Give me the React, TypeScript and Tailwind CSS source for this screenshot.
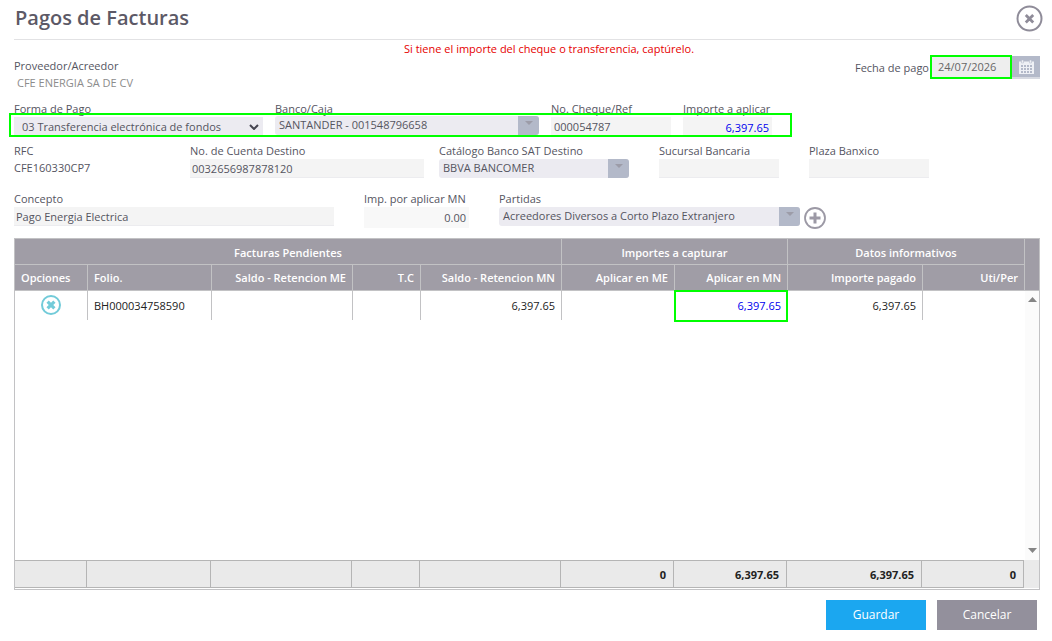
import React from "react";

interface FieldProps {
  label: string;
  className?: string;
  children?: React.ReactNode;
}

const Field = ({ label, className = "", children }: FieldProps) => (
  <div className={`flex shrink-0 flex-col items-start ${className}`}>
    <label className="h-4 whitespace-nowrap leading-4">{label}</label>
    {children}
  </div>
);

interface ComboProps {
  value: string;
  className?: string;
}

const Combo = ({ value, className = "" }: ComboProps) => (
  <div className={`flex h-[19px] overflow-hidden rounded-[3px] bg-[#ecebf1] ${className}`}>
    <span className="flex-1 whitespace-nowrap pl-1 leading-[18px]">{value}</span>
    <span className="flex w-[21px] justify-center bg-[#b3b9c9] pt-[5px]">
      <svg width="8" height="4" viewBox="0 0 8 4">
        <path d="M0 0h8L4 4z" fill="#9c9ca8" />
      </svg>
    </span>
  </div>
);

const columns = [
  { title: "Opciones", width: "w-[73px]", align: "text-left", value: "", total: "" },
  { title: "Folio.", width: "w-[124px]", align: "text-left", value: "BH000034758590", total: "" },
  { title: "Saldo - Retencion ME", width: "w-[141px]", align: "text-right", value: "", total: "" },
  { title: "T.C", width: "w-[68px]", align: "text-right", value: "", total: "" },
  { title: "Saldo - Retencion MN", width: "w-[141px]", align: "text-right", value: "6,397.65", total: "" },
  { title: "Aplicar en ME", width: "w-[113px]", align: "text-right", value: "", total: "0" },
  { title: "Aplicar en MN", width: "w-[113px]", align: "text-right", value: "6,397.65", total: "6,397.65" },
  { title: "Importe pagado", width: "w-[135px]", align: "text-right", value: "6,397.65", total: "6,397.65" },
  { title: "Uti/Per", width: "w-[102px]", align: "text-right", value: "", total: "0" },
];

const groups = [
  { title: "Facturas Pendientes", width: "w-[547px]" },
  { title: "Importes a capturar", width: "w-[226px]" },
  { title: "Datos informativos", width: "w-[237px]" },
];

const Header = () => (
  <header className="flex h-10 items-start justify-between border-b border-[#e2e2e4] pl-px">
    <h1 className="pt-1 text-[20px] font-semibold leading-7 text-[#5c5966]">Pagos de Facturas</h1>
    <button className="-mr-[3px] mt-[5px]">
      <svg width="27" height="27" viewBox="0 0 27 27" fill="none" stroke="#8f8c99">
        <circle cx="13.5" cy="13.5" r="12" strokeWidth="2" />
        <path d="M9.8 10l7.4 7.4M17.2 10l-7.4 7.4" strokeWidth="2.8" />
      </svg>
    </button>
  </header>
);

const DateField = () => (
  <div className="flex items-start">
    <span className="pr-px pt-[5px] leading-4">Fecha de pago</span>
    <div className="flex h-6 w-[82px] items-center border-2 border-[#00ff00] bg-[#eeeeee] pl-1.5 text-[#666]">
      24/07/2026
    </div>
    <div className="mt-px flex h-[23px] w-7 justify-center border-b-2 border-[#d6d9e1] bg-[#b3b9c9] pt-1">
      <svg width="15" height="14" viewBox="0 0 15 14">
        <path d="M0 1.5h15V14H0z" fill="#eef0f5" />
        <path d="M2.5 0h2v3h-2zM10.5 0h2v3h-2z" fill="#eef0f5" stroke="#b3b9c9" strokeWidth=".5" />
        <path
          d="M2 5h2v2H2zM5 5h2v2H5zM8 5h2v2H8zM11 5h2v2h-2zM2 8h2v2H2zM5 8h2v2H5zM8 8h2v2H8zM11 8h2v2h-2zM2 11h2v2H2zM5 11h2v2H5zM8 11h2v2H8zM11 11h2v2h-2z"
          fill="#b3b9c9"
        />
      </svg>
    </div>
  </div>
);

const InvoiceTable = () => (
  <section className="flex h-[352px] border border-[#c2c2c4] text-[#222]">
    <div className="flex w-full flex-col">
      <div className="flex h-[52px] border-b border-[#c2c2c4] bg-[#a09da6] font-semibold text-white">
        <div className="flex w-[1010px] flex-col">
          <div className="flex h-[26px] border-b border-[#c2c2c4]">
            {groups.map((group) => (
              <div key={group.title} className={`border-r border-[#c2c2c4] pt-0.5 text-center leading-6 ${group.width}`}>
                {group.title}
              </div>
            ))}
          </div>
          <div className="flex h-[25px]">
            {columns.map((col) => (
              <div
                key={col.title}
                className={`whitespace-nowrap border-r border-[#c2c2c4] px-1.5 pt-px leading-6 first:pl-1.5 ${col.width} ${col.align}`}
              >
                {col.title}
              </div>
            ))}
          </div>
        </div>
      </div>

      <div className="flex h-[269px] justify-between">
        <div className="flex h-[29px]">
          {columns.map((col, i) => (
            <div
              key={col.title}
              className={`relative border-r px-1.5 leading-[29px] ${col.width} ${col.align} ${
                i === 8 ? "border-transparent" : "border-[#c2c2c4]"
              } ${i === 6 ? "text-[#0000ee]" : ""}`}
            >
              {i === 0 ? (
                <svg className="ml-5 mt-1" width="20" height="20" viewBox="0 0 20 20" fill="none" stroke="#72cbd9">
                  <circle cx="10" cy="10" r="9" strokeWidth="2" />
                  <path d="M6.6 6.6l6.8 6.8M13.4 6.6l-6.8 6.8" strokeWidth="3.2" />
                </svg>
              ) : (
                col.value
              )}
              {i === 6 && <span className="absolute -left-px -right-px -top-px h-8 border-2 border-[#00ff00]" />}
            </div>
          ))}
        </div>
        <div className="flex w-[15px] flex-col items-center justify-between bg-[#fbfbfb] pb-[7px] pt-[5px]">
          <svg width="9" height="6" viewBox="0 0 9 6">
            <path d="M0 6L4.5 1L9 6z" fill="#858585" />
          </svg>
          <svg width="9" height="5" viewBox="0 0 9 5">
            <path d="M0 0h9L4.5 5z" fill="#858585" />
          </svg>
        </div>
      </div>

      <div className="flex h-7 bg-[#eaeaea] font-bold">
        {columns.map((col, i) => (
          <div
            key={col.title}
            className={`border-y border-r border-[#b5b5b5] pr-[7px] text-right leading-[27px] ${
              i === 0 ? "w-[72px]" : col.width
            }`}
          >
            {col.total}
          </div>
        ))}
      </div>
    </div>
  </section>
);

export default function App() {
  return (
    <main className="h-[641px] w-[1052px] overflow-hidden bg-white pl-[14px] pr-3 font-['Open_Sans',sans-serif] text-[11px] text-[#55555f]">
      <Header />
      <p className="h-[15px] pl-[390px] pt-px leading-4 text-[#e60000]">
        Si tiene el importe del cheque o transferencia, captúrelo.
      </p>

      <div className="flex h-[46px] items-start justify-between">
        <Field label="Proveedor/Acreedor" className="pt-[3px]">
          <span className="pl-[3px] pt-px leading-4 text-[#8c8c8c]">CFE ENERGIA SA DE CV</span>
        </Field>
        <DateField />
      </div>

      {/* Datos del pago */}
      <div className="relative flex h-[42px]">
        <Field label="Forma de Pago" className="w-[261px]">
          <div className="flex h-[19px] w-[249px] items-center justify-between bg-[#ecebf1] pl-2 pr-1">
            <span className="pt-px">03 Transferencia electrónica de fondos</span>
            <svg width="10" height="6" viewBox="0 0 10 6" fill="none" stroke="#454550" strokeWidth="2">
              <path d="M1 1l4 4 4-4" />
            </svg>
          </div>
        </Field>
        <Field label="Banco/Caja" className="w-[276px]">
          <Combo value="SANTANDER - 001548796658" className="-mt-px w-[264px]" />
        </Field>
        <Field label="No. Cheque/Ref" className="w-[132px]">
          <div className="h-[19px] w-[120px] bg-[#f4f4f4] pl-[3px] leading-[19px]">000054787</div>
        </Field>
        <Field label="Importe a aplicar">
          <div className="h-[19px] w-[89px] bg-[#f4f4f4] pr-[3px] pt-px text-right leading-[19px] text-[#0000ee]">6,397.65</div>
        </Field>
        <span className="absolute -left-[5px] top-3 h-6 w-[783px] border-2 border-[#00ff00]" />
      </div>

      <div className="flex h-12">
        <Field label="RFC" className="w-[176px]">
          <span className="pt-px leading-4">CFE160330CP7</span>
        </Field>
        <Field label="No. de Cuenta Destino" className="w-[249px]">
          <div className="h-[19px] w-[234px] border-b border-[#ececef] bg-[#f4f4f4] pl-0.5 leading-[19px]">0032656987878120</div>
        </Field>
        <Field label="Catálogo Banco SAT Destino" className="w-[220px]">
          <Combo value="BBVA BANCOMER" className="w-[190px]" />
        </Field>
        <Field label="Sucursal Bancaria" className="w-[150px]">
          <div className="h-[19px] w-[120px] border-b border-[#ececef] bg-[#f4f4f4]" />
        </Field>
        <Field label="Plaza Banxico">
          <div className="h-[19px] w-[120px] border-b border-[#ececef] bg-[#f4f4f4]" />
        </Field>
      </div>

      <div className="flex h-[47px]">
        <Field label="Concepto" className="w-[350px]">
          <div className="h-[19px] w-[320px] border-b border-[#ececef] bg-[#f4f4f4] pl-0.5 leading-[19px]">
            Pago Energia Electrica
          </div>
        </Field>
        <Field label="Imp. por aplicar MN" className="w-[135px]">
          <div className="h-[21px] w-[105px] bg-[#f8f8f8] pr-[3px] text-right leading-[21px]">0.00</div>
        </Field>
        <Field label="Partidas">
          <Combo value="Acreedores Diversos a Corto Plazo Extranjero" className="w-[301px]" />
        </Field>
        <svg className="ml-1 mt-4 shrink-0" width="22" height="22" viewBox="0 0 22 22" fill="none" stroke="#9c99a5">
          <circle cx="11" cy="11" r="10" strokeWidth="1.8" />
          <path d="M11 5.5v11M5.5 11h11" strokeWidth="3" />
        </svg>
      </div>

      <InvoiceTable />

      <footer className="mt-[10px] flex justify-end gap-[11px] pr-[3px] text-[12px] text-white">
        <button className="h-[30px] w-[100px] bg-[#1ba7f0]">Guardar</button>
        <button className="h-[30px] w-[100px] bg-[#93909c]">Cancelar</button>
      </footer>
    </main>
  );
}
